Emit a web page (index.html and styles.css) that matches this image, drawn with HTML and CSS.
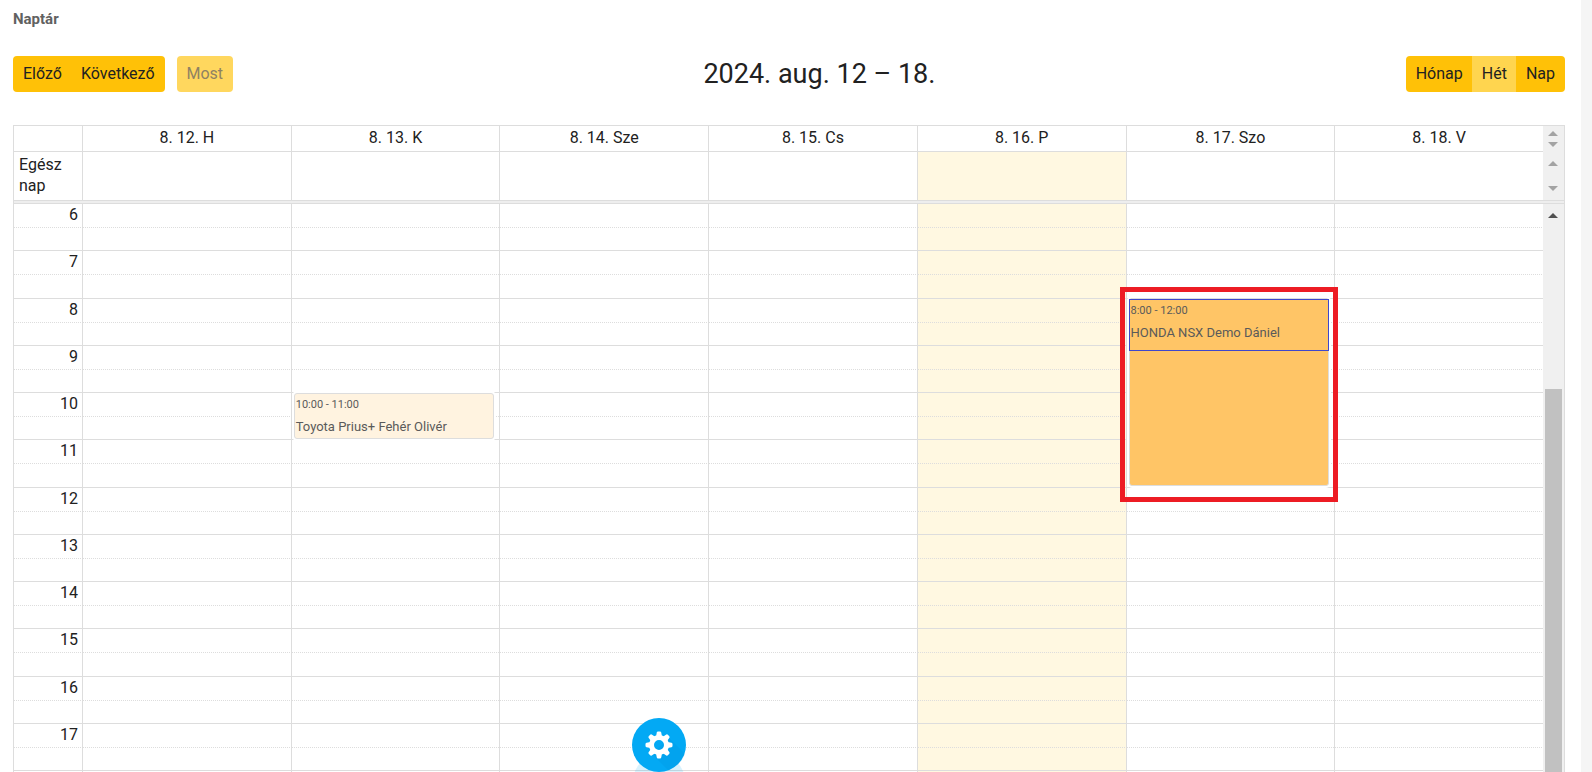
FILE: index.html
```
<!DOCTYPE html>
<html lang="hu">
<head>
    <meta charset="UTF-8">
    <meta name="viewport" content="width=device-width, initial-scale=1.0">
    <title>Naptár</title>
    <link rel="stylesheet" href="styles.css">
</head>
<body>
    <main class="page">
        <h1 class="page-title">Naptár</h1>

        <div class="toolbar">
            <div class="toolbar-left">
                <div class="btn-group">
                    <button type="button" class="btn">Előző</button>
                    <button type="button" class="btn">Következő</button>
                </div>
                <button type="button" class="btn btn-today" disabled>Most</button>
            </div>
            <h2 class="toolbar-title">2024. aug. 12 – 18.</h2>
            <div class="toolbar-right">
                <div class="btn-group">
                    <button type="button" class="btn">Hónap</button>
                    <button type="button" class="btn active">Hét</button>
                    <button type="button" class="btn">Nap</button>
                </div>
            </div>
        </div>

        <div class="calendar">
            <div class="calendar-section">
                <div class="grid-wrap">
                    <table class="grid">
                        <colgroup><col class="axis-col"><col><col><col><col><col><col><col></colgroup>
                        <thead>
                            <tr class="day-row">
                                <td></td>
                                <th scope="col">8. 12. H</th>
                                <th scope="col">8. 13. K</th>
                                <th scope="col">8. 14. Sze</th>
                                <th scope="col">8. 15. Cs</th>
                                <th scope="col">8. 16. P</th>
                                <th scope="col">8. 17. Szo</th>
                                <th scope="col">8. 18. V</th>
                            </tr>
                        </thead>
                        <tbody>
                            <tr class="all-day-row">
                                <th scope="row">Egész nap</th>
                                <td></td><td></td><td></td><td></td><td class="today"></td><td></td><td></td>
                            </tr>
                        </tbody>
                    </table>
                </div>
                <div class="scrollbars">
                    <div class="scroll-track scroll-small">
                        <span class="arrow-up"></span>
                        <span class="arrow-down"></span>
                    </div>
                    <div class="scroll-track scroll-medium">
                        <span class="arrow-up"></span>
                        <span class="arrow-down"></span>
                    </div>
                </div>
            </div>

            <div class="divider"></div>

            <div class="calendar-section time-section">
                <div class="grid-wrap">
                    <table class="grid time-grid">
                        <colgroup><col class="axis-col"><col><col><col><col><col><col><col></colgroup>
                        <tbody>
                            <tr><th scope="row">6</th><td></td><td></td><td></td><td></td><td class="today"></td><td></td><td></td></tr>
                            <tr><th scope="row">7</th><td></td><td></td><td></td><td></td><td class="today"></td><td></td><td></td></tr>
                            <tr>
                                <th scope="row">8</th><td></td><td></td><td></td><td></td><td class="today"></td>
                                <td>
                                    <div class="highlight"></div>
                                    <a href="#" class="event event-orange">
                                        <div class="event-content">
                                            <div class="event-time">8:00 - 12:00</div>
                                            <div class="event-title">HONDA NSX Demo Dániel</div>
                                        </div>
                                    </a>
                                </td>
                                <td></td>
                            </tr>
                            <tr><th scope="row">9</th><td></td><td></td><td></td><td></td><td class="today"></td><td></td><td></td></tr>
                            <tr>
                                <th scope="row">10</th><td></td>
                                <td>
                                    <a href="#" class="event event-light">
                                        <div class="event-content">
                                            <div class="event-time">10:00 - 11:00</div>
                                            <div class="event-title">Toyota Prius+ Fehér Olivér</div>
                                        </div>
                                    </a>
                                </td>
                                <td></td><td></td><td class="today"></td><td></td><td></td>
                            </tr>
                            <tr><th scope="row">11</th><td></td><td></td><td></td><td></td><td class="today"></td><td></td><td></td></tr>
                            <tr><th scope="row">12</th><td></td><td></td><td></td><td></td><td class="today"></td><td></td><td></td></tr>
                            <tr><th scope="row">13</th><td></td><td></td><td></td><td></td><td class="today"></td><td></td><td></td></tr>
                            <tr><th scope="row">14</th><td></td><td></td><td></td><td></td><td class="today"></td><td></td><td></td></tr>
                            <tr><th scope="row">15</th><td></td><td></td><td></td><td></td><td class="today"></td><td></td><td></td></tr>
                            <tr><th scope="row">16</th><td></td><td></td><td></td><td></td><td class="today"></td><td></td><td></td></tr>
                            <tr><th scope="row">17</th><td></td><td></td><td></td><td></td><td class="today"></td><td></td><td></td></tr>
                            <tr><td></td><td></td><td></td><td></td><td></td><td class="today"></td><td></td><td></td></tr>
                        </tbody>
                    </table>
                </div>
                <div class="scroll-track scroll-main">
                    <span class="arrow-up dark"></span>
                    <div class="scroll-thumb"></div>
                </div>
            </div>
        </div>
    </main>
    <div class="page-edge"></div>

    <button type="button" class="fab" aria-label="Beállítások">
        <svg viewBox="0 0 54 54" width="54" height="54">
            <path d="M37 20 L53 36 A27 27 0 0 1 36 52 L20 36 Z" fill="#0288d1" opacity="0.18"/>
            <g fill="#fff">
                <path fill-rule="evenodd" d="M27 17a10 10 0 1 0 0 20a10 10 0 1 0 0-20zM27 22a5 5 0 1 1 0 10a5 5 0 1 1 0-10z"/>
                <path id="tooth" d="M24 18.500L24.800 14.500Q25 13.500 26 13.500H28Q29 13.500 29.200 14.500L30 18.500z"/>
                <use href="#tooth" transform="rotate(45 27 27)"/>
                <use href="#tooth" transform="rotate(90 27 27)"/>
                <use href="#tooth" transform="rotate(135 27 27)"/>
                <use href="#tooth" transform="rotate(180 27 27)"/>
                <use href="#tooth" transform="rotate(225 27 27)"/>
                <use href="#tooth" transform="rotate(270 27 27)"/>
                <use href="#tooth" transform="rotate(315 27 27)"/>
            </g>
        </svg>
    </button>
</body>
</html>
```

FILE: styles.css
```
* {
    margin: 0;
    padding: 0;
    box-sizing: border-box;
}

body {
    display: flex;
    height: 100vh;
    overflow: hidden;
    font-family: Roboto, 'Liberation Sans', sans-serif;
    font-size: 16px;
    line-height: 21px;
    color: #212121;
    background: #fff;
}

.page {
    flex: 1;
    min-width: 0;
    display: flex;
    flex-direction: column;
    padding: 9px 16px 0 13px;
}

.page-edge {
    width: 11px;
    background: #f5f5f5;
}

.page-title {
    font-size: 15px;
    font-weight: 700;
    color: #616161;
    margin-bottom: 26px;
}

/* toolbar */
.toolbar {
    display: flex;
    justify-content: space-between;
    align-items: center;
    height: 36px;
    margin-bottom: 33px;
}

.toolbar-left {
    display: flex;
    gap: 12px;
}

.toolbar-title {
    font-size: 27px;
    font-weight: 400;
    line-height: 36px;
}

.btn-group {
    display: flex;
    border-radius: 4px;
    overflow: hidden;
}

.btn {
    height: 36px;
    padding: 0 10px 2px;
    border: none;
    background: #ffc107;
    color: #212121;
    font-family: inherit;
    font-size: 16px;
    cursor: pointer;
}

.btn + .btn {
    margin-left: -1px;
}

.btn.active {
    background: #ffd54f;
}

.btn-today {
    border-radius: 4px;
    background: #ffd75e;
    color: #8f8263;
    cursor: default;
}

/* calendar */
.calendar {
    flex: 1;
    min-height: 0;
    display: flex;
    flex-direction: column;
    overflow: hidden;
    border: 1px solid #ddd;
    border-bottom: none;
}

.calendar-section {
    display: flex;
}

.time-section {
    flex: 1;
    min-height: 0;
    border-top: 1px solid #ddd;
}

.divider {
    height: 3px;
    background: #eee;
    border-top: 1px solid #ddd;
}

.grid-wrap {
    flex: 1;
    min-width: 0;
}

.grid {
    width: 100%;
    table-layout: fixed;
    border-collapse: separate;
    border-spacing: 0;
}

.axis-col {
    width: 68px;
}

.grid th {
    font-weight: 400;
}

.grid th + td,
.grid th + th,
.grid td + td,
.grid td + th {
    border-left: 1px solid #ddd;
}

.day-row {
    height: 25px;
}

.day-row th {
    padding-bottom: 2px;
}

.all-day-row {
    height: 49px;
}

.all-day-row th,
.all-day-row td {
    border-top: 1px solid #ddd;
}

.all-day-row th {
    padding: 0 5px 2px;
    text-align: left;
}

.today {
    background-color: #fff8e1;
}

/* the dotted line marks the half hour */
.time-grid th,
.time-grid td {
    position: relative;
    vertical-align: top;
    border-bottom: 1px solid #ddd;
    background-image: linear-gradient(90deg, #ddd 1px, transparent 1px);
    background-size: 2px 1px;
    background-repeat: repeat-x;
    background-position: 0 23px;
}

.time-grid tr {
    height: 47px;
}

.time-grid tr:nth-child(4n + 2) {
    height: 48px;
}

.time-grid th {
    padding-right: 4px;
    text-align: right;
}

/* events */
.event {
    position: absolute;
    top: 0;
    left: 2px;
    right: 5px;
    z-index: 1;
    border: 1px solid #ddd;
    border-radius: 3px;
    box-shadow: 0 0 0 2px #fff;
    color: #5a5a5a;
    font-size: 13px;
    text-decoration: none;
}

.event-light {
    height: 46px;
    background: #fff3e0;
}

.event-orange {
    top: -1px;
    height: 188px;
    background: #ffc566;
}

.event-orange .event-content {
    height: 52px;
    margin: 0 -1px;
    border: 1px solid #3f48cc;
}

.event-content {
    padding: 0 1px;
    white-space: nowrap;
}

.event-time {
    font-size: 11px;
    line-height: 22px;
}

.highlight {
    position: absolute;
    top: -12px;
    left: -7px;
    width: calc(100% + 11px);
    height: 215px;
    border: 5px solid #ed1c24;
    z-index: 2;
    pointer-events: none;
}

/* scrollbars */
.scrollbars {
    display: flex;
    flex-direction: column;
}

.scroll-track {
    width: 21px;
    padding-right: 1px;
    display: flex;
    flex-direction: column;
    align-items: center;
    background: #f0f0f0;
}

.scroll-small {
    height: 25px;
    padding-top: 5px;
    padding-bottom: 4px;
    justify-content: space-between;
}

.scroll-medium {
    height: 49px;
    padding-top: 10px;
    padding-bottom: 9px;
    justify-content: space-between;
}

.scroll-main {
    padding-top: 9px;
}

.arrow-up,
.arrow-down {
    border: 5px solid transparent;
}

.arrow-up {
    border-top: none;
    border-bottom-color: #a3a3a3;
}

.arrow-down {
    border-bottom: none;
    border-top-color: #a3a3a3;
}

.arrow-up.dark {
    border-bottom-color: #505050;
}

.scroll-thumb {
    flex: 1;
    width: 17px;
    margin-top: 171px;
    background: #c1c1c1;
}

/* floating button */
.fab {
    position: fixed;
    bottom: 0;
    left: calc(50% - 164px);
    width: 54px;
    height: 54px;
    border: none;
    border-radius: 50%;
    background: #03a9f4;
    box-shadow: 0 36px 0 -1px rgba(3, 169, 244, 0.15);
    cursor: pointer;
    z-index: 10;
}

.fab svg {
    display: block;
}
```
